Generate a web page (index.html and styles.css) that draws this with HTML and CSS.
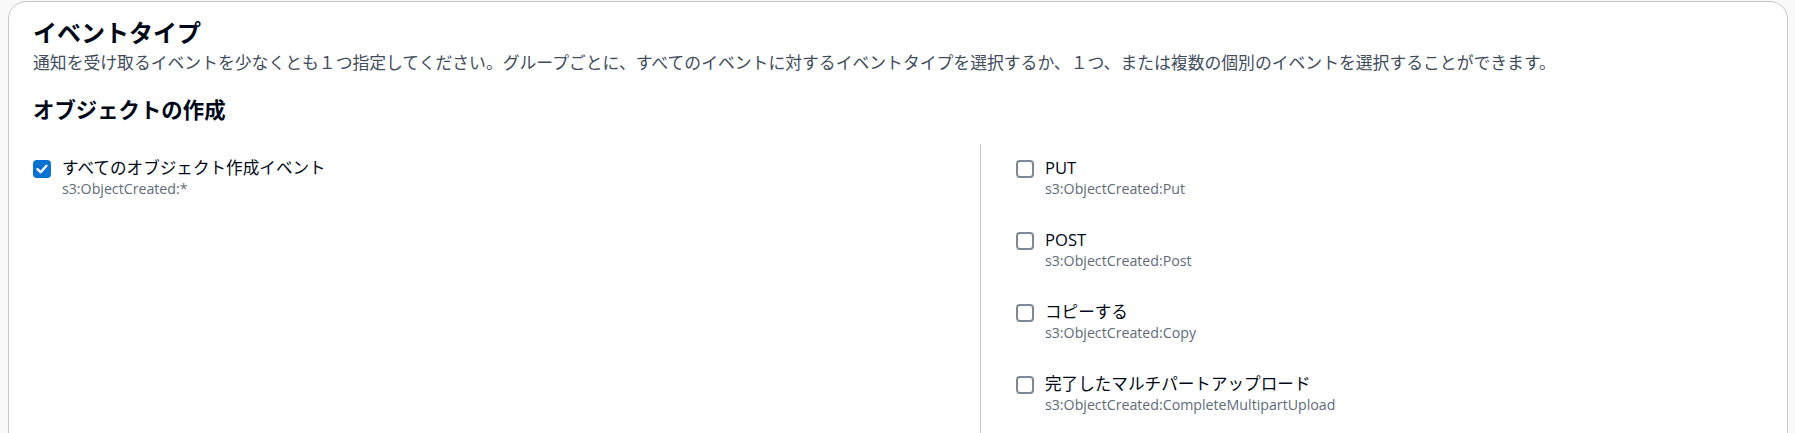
FILE: index.html
```html
<!DOCTYPE html>
<html lang="ja">
<head>
<meta charset="utf-8">
<link rel="stylesheet" href="styles.css">
</head>
<body>
<div class="card">
  <div class="header">
    <h2 class="title">イベントタイプ</h2>
    <p class="desc">通知を受け取るイベントを少なくとも１つ指定してください。グループごとに、すべてのイベントに対するイベントタイプを選択するか、１つ、または複数の個別のイベントを選択することができます。</p>
    <h3 class="subtitle">オブジェクトの作成</h3>
  </div>
  <div class="grid">
    <div class="col col-left">
      <label class="option">
        <span class="box checked"><svg viewBox="0 0 18 18" width="18" height="18"><path d="M4.5 9.2 L7.6 12.2 L13.5 5.8" fill="none" stroke="#fff" stroke-width="2.4" stroke-linecap="round" stroke-linejoin="round"/></svg></span>
        <span class="text"><span class="label">すべてのオブジェクト作成イベント</span><span class="sub">s3:ObjectCreated:*</span></span>
      </label>
    </div>
    <div class="col col-right">
      <label class="option">
        <span class="box"></span>
        <span class="text"><span class="label">PUT</span><span class="sub">s3:ObjectCreated:Put</span></span>
      </label>
      <label class="option">
        <span class="box"></span>
        <span class="text"><span class="label">POST</span><span class="sub">s3:ObjectCreated:Post</span></span>
      </label>
      <label class="option">
        <span class="box"></span>
        <span class="text"><span class="label">コピーする</span><span class="sub">s3:ObjectCreated:Copy</span></span>
      </label>
      <label class="option">
        <span class="box"></span>
        <span class="text"><span class="label">完了したマルチパートアップロード</span><span class="sub">s3:ObjectCreated:CompleteMultipartUpload</span></span>
      </label>
    </div>
  </div>
</div>
</body>
</html>
```
FILE: styles.css
```css
html, body {
  margin: 0;
  padding: 0;
  background: #f9f9fa;
  overflow: hidden;
  font-family: "Open Sans", "Noto Sans CJK JP", sans-serif;
  color: #000716;
}
.card {
  margin: 1px 0 0 8px;
  width: 1780px;
  min-height: 460px;
  box-sizing: border-box;
  background: #fff;
  border: 1px solid #c6c6cd;
  border-radius: 18px;
  padding: 16px 21px 0 21px;
}
.header {
  padding-left: 3px;
}
.title {
  margin: 0;
  font-size: 24px;
  line-height: 30px;
  font-weight: 700;
}
.desc {
  margin: 4px 0 0 0;
  font-size: 16.82px;
  line-height: 22px;
  color: #414d5c;
}
.subtitle {
  margin: 22px 0 0 0;
  font-size: 21.4px;
  line-height: 28px;
  font-weight: 700;
}
.grid {
  display: grid;
  grid-template-columns: 950px 1fr;
  margin-top: 20px;
  min-height: 300px;
}
.col {
  display: flex;
  flex-direction: column;
  gap: 31px;
  padding-top: 13px;
}
.col-right {
  border-left: 1px solid #c6c6cd;
  padding-left: 32px;
}
.option {
  display: flex;
  align-items: flex-start;
  gap: 11px;
}
.box {
  flex: none;
  width: 18px;
  height: 18px;
  box-sizing: border-box;
  margin: 3px 0 0 3px;
  border: 2px solid #7d8998;
  border-radius: 4px;
  background: #fff;
  display: flex;
}
.box.checked {
  background: #0972d3;
  border-color: #0972d3;
}
.box.checked svg {
  margin: -2px;
}
.text {
  display: flex;
  flex-direction: column;
}
.label {
  font-size: 16.6px;
  line-height: 22px;
}
.sub {
  font-size: 14.2px;
  line-height: 19px;
  color: #5f6b7a;
}
```
